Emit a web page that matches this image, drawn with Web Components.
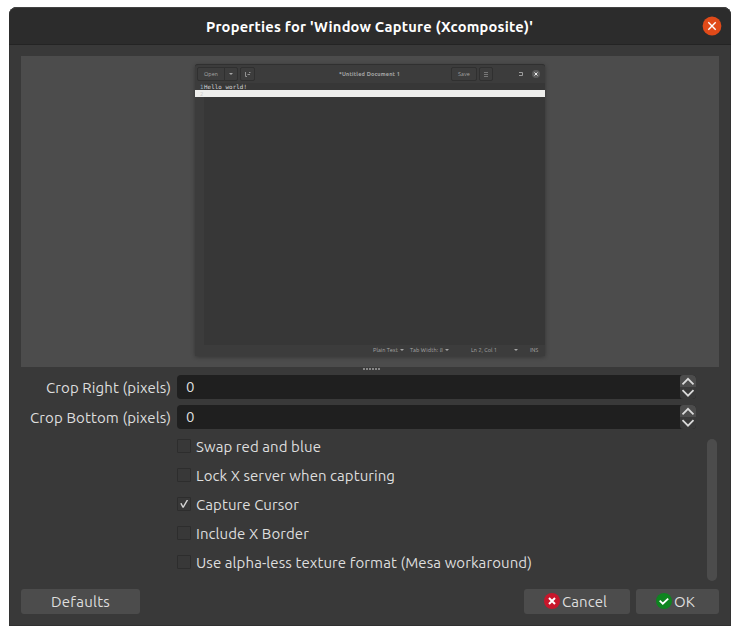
<!DOCTYPE html>
<html lang="en">
<head>
<meta charset="utf-8">
<title>Properties</title>
<style>
html,body{margin:0;background:#fff;overflow:hidden}
body{font:15px/20px Ubuntu,"Noto Sans","Open Sans",sans-serif;color:#dedede}
properties-dialog{margin:7px 9px 0}
</style>
</head>
<body>
<properties-dialog></properties-dialog>
<script>
function define(name, html, setup) {
  const t = document.createElement('template');
  t.innerHTML = html;
  customElements.define(name, class extends HTMLElement {
    connectedCallback() {
      if (this.shadowRoot) return;
      this.attachShadow({mode: 'open'}).append(t.content.cloneNode(true));
      if (setup) setup(this, this.shadowRoot);
    }
  });
}

// A single line of text, tracked so that it spans the width given in `w`.
define('fit-text', `<style>:host{display:block;white-space:pre;flex:none}span{display:inline-block}</style><span><slot></slot></span>`,
  (host, root) => {
    const w = +host.getAttribute('w'), s = root.querySelector('span');
    const n = host.textContent.length;
    host.style.width = w + 'px';
    const natural = s.getBoundingClientRect().width;
    s.style.letterSpacing = ((w - natural) / n) + 'px';
  });

define('title-bar', `<style>
:host{display:flex;height:38px;box-sizing:border-box;background:#2c2c2c;border-top:1px solid #424242;border-bottom:1px solid #242424;border-radius:8px 8px 0 0;align-items:center;padding:1px 9px 0 197px;justify-content:space-between;color:#fff;font-weight:700;font-size:14.67px}
fit-text{margin-top:1px}
svg{display:block;margin-top:-1px}
</style><fit-text w="327">Properties for 'Window Capture (Xcomposite)'</fit-text>
<svg width="20" height="20" viewBox="0 0 20 20"><circle cx="10" cy="10" r="9.4" fill="#e04a19"/><path d="M6.3 6.3l7.4 7.4M13.7 6.3l-7.4 7.4" stroke="#fff" stroke-width="1.4"/></svg>`);

define('mini-button', `<style>
:host{display:flex;box-sizing:border-box;height:14px;border:1px solid #303030;border-radius:2px;align-items:center;justify-content:center;background:#3d3d3d}
</style><slot></slot>`);

define('mini-arrow', `<style>:host{display:block;border:2px solid transparent;border-top-color:#a5a5a5;border-bottom:0;width:0;height:0}</style>`);

define('editor-window', `<style>
:host{display:flex;flex-direction:column;box-sizing:border-box;width:350px;height:292px;background:#373737;border-radius:3px 3px 0 0;box-shadow:0 1px 4px #0005;font-size:5.6px;line-height:8px;color:#a8a8a8}
.head{height:19px;box-sizing:border-box;background:#3c3c3c;border-top:1px solid #303030;border-radius:3px 3px 0 0;display:flex;align-items:center;padding:0 5px 0 2px}
.title{margin-left:84px;font-weight:700}
.save{margin-left:51px;width:26px}
.code{height:7px;display:flex;background:linear-gradient(90deg,#3c3c3c 9px,#373737 9px);font:5.8px/8px "DejaVu Sans Mono",monospace;color:#dcdcdc}
.code fit-text:first-child{margin-left:5px;color:#8fb0c3}
.code fit-text:last-child{margin-left:1px}
.line{height:7px;background:#eeeeec;color:#d0d0ce;font:5.5px/8px "DejaVu Sans Mono",monospace;padding-left:5px;box-sizing:border-box}
.body{flex:1;background:linear-gradient(90deg,#3c3c3c 9px,#373737 9px)}
.status{height:11px;box-sizing:border-box;background:#3c3c3c;display:flex;align-items:center;padding:0 0 1px 178px}
svg{display:block}
</style>
<div class="head">
<mini-button style="width:28px;border-radius:2px 0 0 2px"><fit-text w="14">Open</fit-text></mini-button>
<mini-button style="width:14px;margin-left:-1px;border-radius:0 2px 2px 0"><mini-arrow></mini-arrow></mini-button>
<mini-button style="width:15px;margin-left:2px"><svg width="6" height="5" viewBox="0 0 6 5"><path d="M.5 0v4.5H2M2.5 2.5H5M5.5 .5H4" fill="none" stroke="#929292"/></svg></mini-button>
<fit-text class="title" w="61">*Untitled Document 1</fit-text>
<mini-button class="save"><fit-text w="12">Save</fit-text></mini-button>
<mini-button style="width:14px;margin-left:2px"><svg width="4" height="5" viewBox="0 0 4 5"><path d="M0 .5h4M0 2.5h4M0 4.5h4" stroke="#777"/></svg></mini-button>
<svg style="margin-left:26px" width="4" height="4" viewBox="0 0 4 4"><path d="M0 .5h3.5v3H0" fill="none" stroke="#9c9c9c"/></svg>
<svg style="margin-left:9px" width="8" height="8" viewBox="0 0 8 8"><circle cx="4" cy="4" r="4" fill="#5d5d5d"/><path d="M2.5 2.5l3 3m0-3l-3 3" stroke="#eee"/></svg>
</div>
<div class="code"><fit-text w="3">1</fit-text><fit-text w="43">Hello world!</fit-text></div>
<div class="line">2</div>
<div class="body"></div>
<div class="status"><fit-text w="25">Plain Text</fit-text><mini-arrow style="margin-left:2px"></mini-arrow><fit-text w="33" style="margin-left:6px">Tab Width: 8</fit-text><mini-arrow style="margin-left:2px"></mini-arrow><fit-text w="26" style="margin-left:22px">Ln 2, Col 1</fit-text><mini-arrow style="margin-left:17px"></mini-arrow><fit-text w="8" style="margin-left:12px">INS</fit-text></div>`);

define('source-preview', `<style>
:host{display:block;box-sizing:border-box;height:311px;margin:11px 12px 0;background:#4c4c4c;padding:8px 0 0 174px}
</style><editor-window></editor-window>`);

define('splitter-handle', `<style>
:host{display:flex;height:8px;box-sizing:border-box;padding-top:1px;justify-content:center;gap:1px;padding-left:3px}
i{width:2px;height:2px;background:#868686}
</style><i></i><i></i><i></i><i></i><i></i><i></i>`);

define('number-row', `<style>
:host{display:flex;height:24px;margin-bottom:6px;align-items:center}
.label{width:162px;display:flex;justify-content:flex-end;margin:2px 6px 0 0}
.field{width:519px;height:24px;background:#1f1f1f;border-radius:4px;display:flex;justify-content:space-between;align-items:center;overflow:hidden}
.value{padding-left:9px}
svg{display:block}
</style><div class="label"><slot></slot></div><div class="field"><span class="value">0</span>
<svg width="16" height="24" viewBox="0 0 16 24"><path d="M0 3Q0 0 3 0H13Q16 0 16 3V12H0z" fill="#4c4c4c"/><path d="M0 12h16v12H3Q0 24 0 21z" fill="#393939"/><path d="M2.5 9.3L8 3.8l5.5 5.5M2.5 15.2L8 20.7l5.5-5.5" fill="none" stroke="#dadada" stroke-width="1.8"/></svg></div>`);

define('check-option', `<style>
:host{display:flex;height:29px;align-items:flex-start}
.box{width:14px;height:14px;box-sizing:border-box;border:1px solid #2d2d2d;border-radius:1px;margin:2px 5px 0 0;background:#383838}
svg{display:none}
:host([checked]) svg{display:block}
slot{display:block}
</style><div class="box"><svg width="12" height="12" viewBox="0 0 12 12"><path d="M2.2 5.6L3.6 5l1.5 2.9L8.6 2l1.6.1-4.5 7.7H4.5z" fill="#d6d6d6"/></svg></div><slot></slot>`);

define('option-list', `<style>
:host{display:flex;justify-content:space-between;height:154px;padding:3px 14px 0 168px;box-sizing:border-box}
.items{display:flex;flex-direction:column;margin-top:-1px}
.bar{width:10px;height:142px;border-radius:5px;background:#4c4c4c;margin-top:1px}
</style><div class="items"><slot></slot></div><div class="bar"></div>`);

define('push-button', `<style>
:host{display:flex;box-sizing:border-box;height:25px;background:#4c4c4c;border-radius:3px;align-items:center;justify-content:center;padding-top:1px}
::slotted(svg){display:block;margin:-2px 2px 0 0;flex:none}
</style><slot></slot>`);

define('properties-dialog', `<style>
:host{display:flex;flex-direction:column;box-sizing:border-box;height:619px;width:722px;background:#393939;border-radius:8px 8px 0 0;box-shadow:inset 0 -1px #303030,inset 1px 0 #333,inset -1px 0 #333}
.form{display:flex;flex-direction:column}
.actions{display:flex;padding:0 12px;gap:6px}
.spacer{flex:1}
</style>
<title-bar></title-bar>
<source-preview></source-preview>
<splitter-handle></splitter-handle>
<div class="form">
<number-row><fit-text w="125">Crop Right (pixels)</fit-text></number-row>
<number-row><fit-text w="141">Crop Bottom (pixels)</fit-text></number-row>
</div>
<option-list>
<check-option><fit-text w="125">Swap red and blue</fit-text></check-option>
<check-option><fit-text w="199">Lock X server when capturing</fit-text></check-option>
<check-option checked><fit-text w="103">Capture Cursor</fit-text></check-option>
<check-option><fit-text w="113">Include X Border</fit-text></check-option>
<check-option><fit-text w="336">Use alpha-less texture format (Mesa workaround)</fit-text></check-option>
</option-list>
<div class="actions">
<push-button style="width:119px"><fit-text w="59">Defaults</fit-text></push-button>
<div class="spacer"></div>
<push-button style="width:106px;padding-right:3px"><svg width="16" height="16" viewBox="0 0 16 16"><circle cx="8" cy="8" r="8" fill="#c7162b"/><path d="M5 5l6 6m0-6l-6 6" stroke="#fff" stroke-width="2"/></svg><fit-text w="45">Cancel</fit-text></push-button>
<push-button style="width:83px;padding-right:4px"><svg width="16" height="16" viewBox="0 0 16 16"><circle cx="8" cy="8" r="8" fill="#0e8420"/><path d="M3.7 7.6l3.1 3 5.4-5" fill="none" stroke="#fff" stroke-width="1.9"/></svg><fit-text w="21">OK</fit-text></push-button>
</div>`);
</script>
</body>
</html>
